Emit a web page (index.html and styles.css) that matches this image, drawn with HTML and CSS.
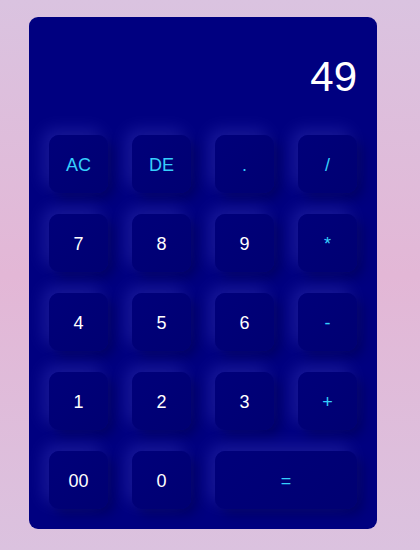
FILE: index.html
```html
<!DOCTYPE html>
<html>
<head>
<meta charset="utf-8">
<link rel="stylesheet" href="styles.css">
</head>
<body>
<div class="calc">
  <div class="display">49</div>
  <div class="keys">
    <button class="key op">AC</button>
    <button class="key op">DE</button>
    <button class="key op">.</button>
    <button class="key op">/</button>
    <button class="key">7</button>
    <button class="key">8</button>
    <button class="key">9</button>
    <button class="key op">*</button>
    <button class="key">4</button>
    <button class="key">5</button>
    <button class="key">6</button>
    <button class="key op">-</button>
    <button class="key">1</button>
    <button class="key">2</button>
    <button class="key">3</button>
    <button class="key op">+</button>
    <button class="key">00</button>
    <button class="key">0</button>
    <button class="key op wide">=</button>
  </div>
</div>
</body>
</html>
```
FILE: styles.css
```css
html, body {
  margin: 0;
  height: 100%;
}
body {
  background: linear-gradient(to bottom, #dac3e0 0%, #e3b7d6 50%, #dbc2df 100%);
  font-family: "Liberation Sans", Arial, sans-serif;
  padding-top: 17px;
  box-sizing: border-box;
}
.calc {
  margin-left: 29px;
  width: 348px;
  height: 512px;
  box-sizing: border-box;
  background: #000080;
  border-radius: 9px;
  padding: 20px;
  display: flex;
  flex-direction: column;
}
.display {
  height: 78px;
  margin-bottom: 20px;
  display: flex;
  align-items: center;
  justify-content: flex-end;
  color: #ffffff;
  font-size: 42px;
  padding-top: 2px;
  box-sizing: border-box;
}
.keys {
  display: grid;
  grid-template-columns: repeat(4, 59px);
  grid-auto-rows: 58px;
  column-gap: 24px;
  row-gap: 21px;
}
.key {
  border: none;
  border-radius: 10px;
  background: linear-gradient(135deg, #00007a, #000072);
  color: #ffffff;
  font-family: "Liberation Sans", Arial, sans-serif;
  font-size: 18px;
  box-shadow: -6px -6px 16px rgba(120, 120, 255, 0.2), 6px 6px 12px rgba(0, 0, 40, 0.3);
  padding: 2px 0 0 0;
}
.key.op {
  color: #36cffc;
}
.wide {
  grid-column: span 2;
}
```
